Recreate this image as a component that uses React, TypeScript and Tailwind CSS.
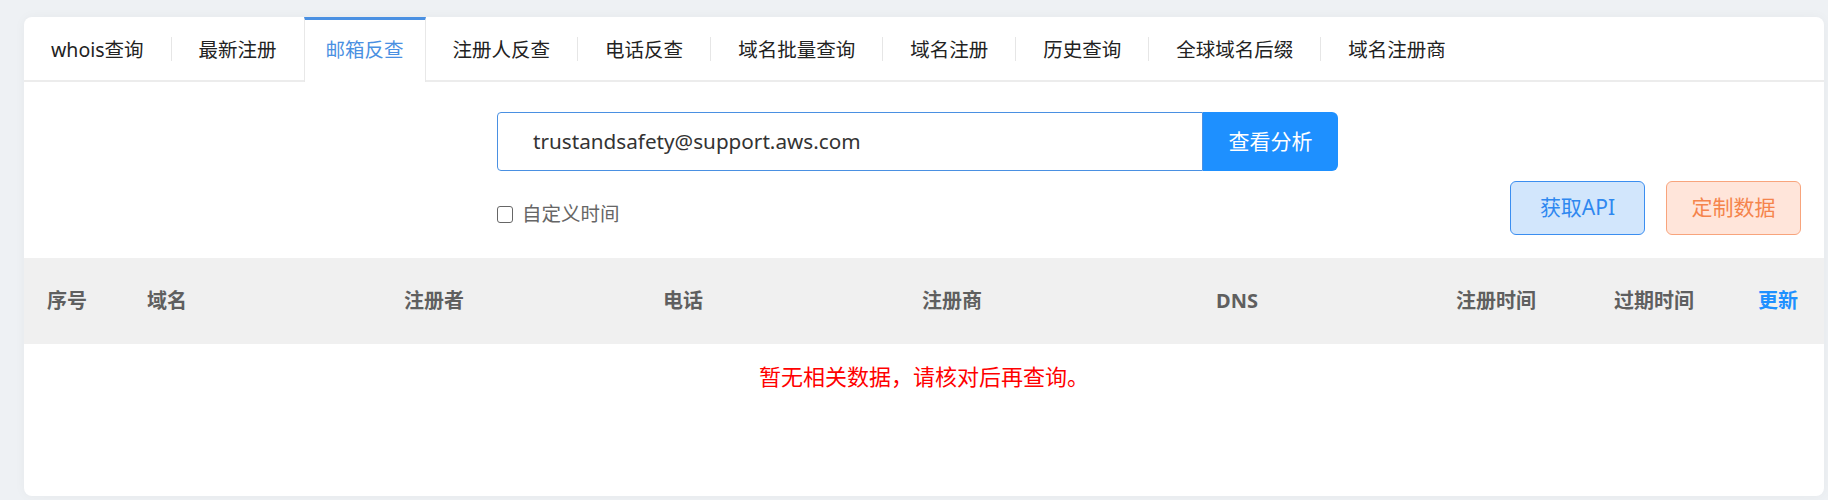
const tabs = [
  "whois查询",
  "最新注册",
  "邮箱反查",
  "注册人反查",
  "电话反查",
  "域名批量查询",
  "域名注册",
  "历史查询",
  "全球域名后缀",
  "域名注册商",
];

const activeTab = 2;

const columns = [
  { label: "序号", w: "w-[100px]" },
  { label: "域名", w: "w-[257px]" },
  { label: "注册者", w: "w-[259px]" },
  { label: "电话", w: "w-[259px]" },
  { label: "注册商", w: "w-[294px]" },
  { label: "DNS", w: "w-[240px]" },
  { label: "注册时间", w: "w-[158px]" },
  { label: "过期时间", w: "w-[144px]" },
];

function TabBar() {
  return (
    <div className="flex items-start h-[65px] border-b-2 border-[#ececec]">
      {tabs.map((t, i) => {
        const isActive = i === activeTab;
        // 활성 탭 양옆에는 구분선 없음
        const showSep = i > 0 && i !== activeTab && i - 1 !== activeTab;
        return (
          <div key={t} className="flex items-start">
            {showSep && <div className="w-px h-[24px] mt-[20px] bg-[#e6e6e6]" />}
            {isActive ? (
              <div className="h-[65px] px-[21px] pt-[16px] bg-white border-t-[3px] border-x border-t-[#4a90e2] border-x-[#e8e8e8] text-[#4a90e2] text-[19.5px] leading-[28px]">
                {t}
              </div>
            ) : (
              <div className="h-[63px] px-[27px] pt-[19px] text-[#222] text-[19.5px] leading-[28px]">
                {t}
              </div>
            )}
          </div>
        );
      })}
    </div>
  );
}

export default function App() {
  return (
    <div
      className="w-[1828px] h-[500px] bg-[#eef1f4] pt-[17px] pl-[24px] pr-[4px]"
      style={{ fontFamily: '"Noto Sans", "Noto Sans CJK SC", sans-serif' }}
    >
      <div className="w-[1800px] h-[479px] bg-white rounded-[8px] shadow-[0_0_12px_rgba(0,0,0,0.04)] overflow-hidden flex flex-col">
        <TabBar />

        <div className="pt-[30px] pl-[473px] flex">
          <div className="w-[706px] h-[59px] border border-[#4a90e2] rounded-l-[4px] flex items-center pl-[35px] text-[20.7px] text-[#333]">
            trustandsafety@support.aws.com
          </div>
          <button className="w-[135px] h-[59px] bg-[#1e90ff] rounded-r-[6px] text-white text-[21px]">
            查看分析
          </button>
        </div>

        <div className="flex items-start pt-[10px] pb-[23px] pr-[23px]">
          <label className="ml-[473px] mt-[21px] flex items-center gap-[9px] text-[19.5px] text-[#666] leading-[24px]">
            <span className="w-[16px] h-[17px] border-[1.5px] border-[#666] rounded-[3px]" />
            自定义时间
          </label>
          <div className="ml-auto flex gap-[21px]">
            <button className="w-[135px] h-[54px] bg-[#d2e6fc] border border-[#3b8ef0] rounded-[6px] text-[#2f88f0] text-[21px]">
              获取API
            </button>
            <button className="w-[135px] h-[54px] bg-[#ffe5da] border border-[#f8a47c] rounded-[6px] text-[#f5844c] text-[21px]">
              定制数据
            </button>
          </div>
        </div>

        <div className="flex h-[86px] bg-[#f0f0f0] items-center text-[20px] font-bold text-[#5f5f5f]">
          {columns.map((c) => (
            <div key={c.label} className={`${c.w} pl-[23px]`}>
              {c.label}
            </div>
          ))}
          <div className="w-[88px] pl-[23px] text-[#1e90ff]">更新</div>
        </div>

        <div className="pt-[17px] text-center text-[22px] text-[#ff0000] leading-[30px]">
          暂无相关数据，请核对后再查询。
        </div>
      </div>
    </div>
  );
}
